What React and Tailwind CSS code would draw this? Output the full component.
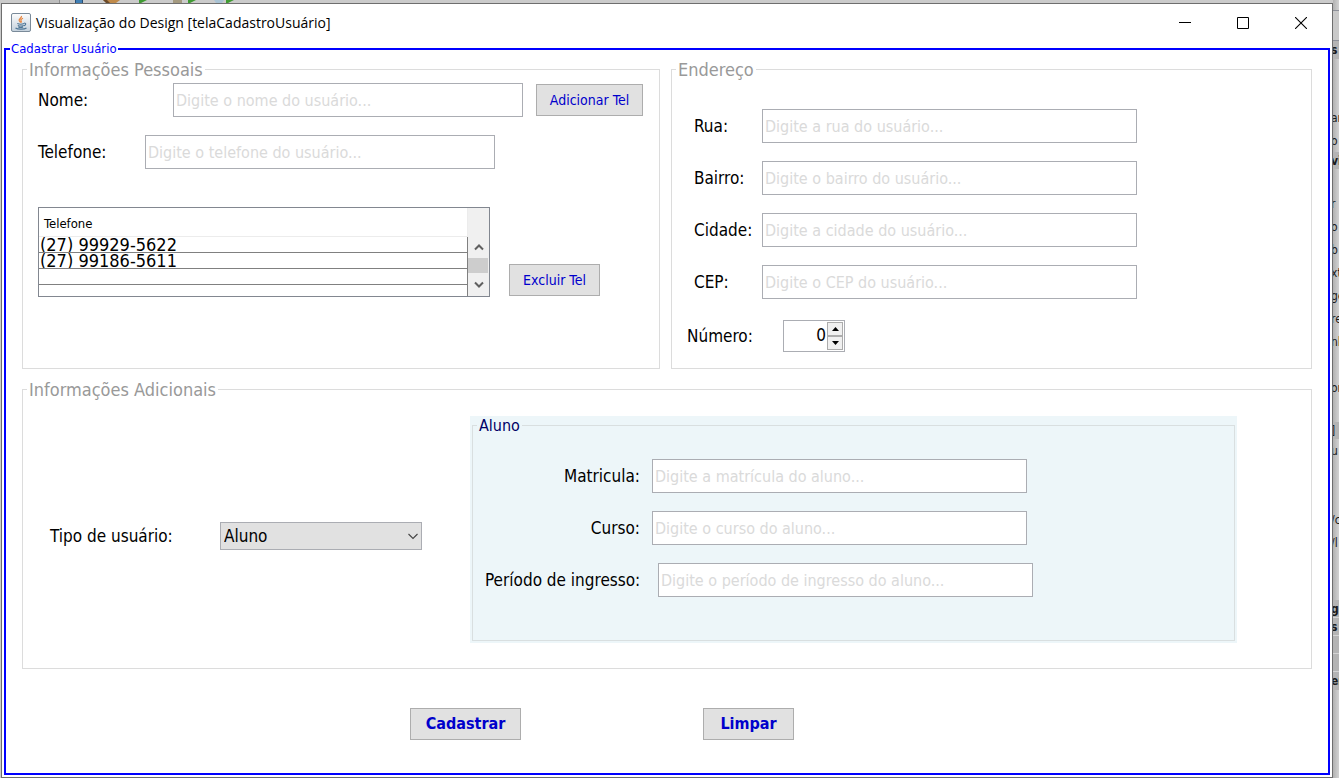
import { useId } from "react";

const tahoma = "font-['DejaVu_Sans_Condensed','Noto_Sans',sans-serif]";

const edgeRows = [
  { box: "h-[10px]", text: "" },
  { box: "h-[31px] border-y border-[#8d9099] bg-[#c9c9c9]", text: "" },
  { box: "h-[18px] bg-[#b4b4b4] font-bold", text: "s" },
  { box: "h-[47px]", text: "" },
  { box: "h-[23px]", text: "ar" },
  { box: "h-[23px]", text: "o" },
  { box: "h-[17px] bg-[#b4b4b4] font-bold", text: "vi" },
  { box: "h-[23px]", text: "" },
  { box: "h-[23px]", text: "r" },
  { box: "h-[23px]", text: "o" },
  { box: "h-[23px]", text: "b" },
  { box: "h-[23px]", text: "xt" },
  { box: "h-[23px]", text: "ge" },
  { box: "h-[23px]", text: "re" },
  { box: "h-[23px]", text: "nl" },
  { box: "h-[23px]", text: "" },
  { box: "h-[23px]", text: "or" },
  { box: "h-[23px]", text: "" },
  { box: "h-[17px] bg-[#b4b4b4]", text: "]" },
  { box: "h-[23px]", text: "u" },
  { box: "h-[46px]", text: "" },
  { box: "h-[23px]", text: "/c" },
  { box: "h-[23px]", text: "/l" },
  { box: "h-[46px]", text: "" },
  { box: "h-[18px] border-b border-[#d4d4d4] bg-[#b4b4b4] font-bold", text: "g" },
  { box: "h-[18px] border-b border-[#d4d4d4] bg-[#b4b4b4] font-bold", text: "s" },
  { box: "h-[18px] border-b border-[#d4d4d4] bg-[#b4b4b4]", text: "" },
  { box: "h-[18px] border-b border-[#d4d4d4] bg-[#b4b4b4]", text: "" },
  { box: "h-[18px] bg-[#b4b4b4] font-bold", text: "er" },
];

function JavaIcon() {
  return (
    <svg width="20" height="20" viewBox="0 0 20 20" aria-hidden="true">
      <defs>
        <linearGradient id="javaTile" x1="0" y1="0" x2="0" y2="1">
          <stop offset="0" stopColor="#fdfdfd" />
          <stop offset="1" stopColor="#c3d0dc" />
        </linearGradient>
      </defs>
      <rect x="0.5" y="0.5" width="19" height="18" rx="1.5" fill="url(#javaTile)" stroke="#7a8a99" />
      <path d="M10.4 3c1 1.500-2.600 2.700-2.300 4.300.1.800.9 1.400 1.300 2M12 5.200c-1.700.7-2.600 1.600-1.900 2.700.5.800.3 1.300-.3 1.900" fill="none" stroke="#e8833a" strokeWidth="1.200" />
      <path d="M6.300 10.600c1.800.7 5 .7 6.800 0M6.800 12.400c1.500.7 4.300.7 5.900 0M7.300 14c1.300.5 3.500.5 4.800 0M13.200 10.200c2.200-.3 1.900 2-.3 2.500M4.500 15c2 1.500 9 1.500 11 0" fill="none" stroke="#4d7595" strokeWidth="1.100" />
    </svg>
  );
}

function ToolbarEdge() {
  return (
    <svg className="block" width="250" height="3" viewBox="0 0 250 3" aria-hidden="true">
      <path d="M39 0h19v3H39z" fill="#bdbdbd" />
      <path d="M58 0h1v3h-1z" fill="#8f8f8f" />
      <path d="M75 0h7v3h-7z" fill="#3f7fb5" />
      <path d="M74 0h1v3h-1zM81 0h1v3h-1z" fill="#2a4f74" />
      <path d="M102 0h17l-4 3h-9z" fill="#c08a4a" />
      <path d="M102 0h4l3 3h-4z" fill="#6b4a2a" />
      <path d="M138 0h8l-6 3h-2z" fill="#3f9b32" />
      <path d="M172 0h9v3h-9z" fill="#a49a80" />
      <path d="M187 0h8l-6 3h-2z" fill="#3f9b32" />
      <path d="M213 0h10l-2 3h-6z" fill="#a9c3d4" />
      <path d="M225 0h8l-6 3h-2z" fill="#3f9b32" />
    </svg>
  );
}

function Field({ label, labelClass, inputClass, placeholder, children }) {
  const id = useId();
  return (
    <div className="flex items-center">
      <label htmlFor={id} className={`shrink-0 whitespace-nowrap text-[17px] leading-5 text-black ${labelClass}`}>
        {label}
      </label>
      <input
        id={id}
        type="text"
        placeholder={placeholder}
        className={`h-[34px] min-w-0 border border-[#abadb3] bg-white px-[2px] text-[16px] text-black outline-none placeholder:text-[#dadada] ${inputClass}`}
      />
      {children}
    </div>
  );
}

function SmallButton({ children, className }) {
  return (
    <button type="button" className={`h-8 shrink-0 whitespace-nowrap border border-[#adadad] bg-[#e1e1e1] text-[#0000cc] ${className}`}>
      {children}
    </button>
  );
}

function Group({ title, className, children }) {
  return (
    <fieldset className={`min-w-0 border border-[#dcdcdc] px-1 ${className}`}>
      <legend className="px-[2px] pt-[2px] text-[18px] leading-4 text-[#999999]">{title}</legend>
      {children}
    </fieldset>
  );
}

function PhoneTable() {
  return (
    <div className="flex h-[90px] w-[452px] border border-[#828790] bg-white">
      <table className="h-[88px] min-w-0 flex-1 border-separate border-spacing-0 text-left text-black">
        <thead>
          <tr>
            <th className="h-[29px] border-b border-r border-[#ececec] px-[5px] pt-[3px] text-[13px] font-normal leading-4">Telefone</th>
          </tr>
        </thead>
        <tbody>
          {["(27) 99929-5622", "(27) 99186-5611", ""].map((phone, i) => (
            <tr key={i}>
              <td className="h-4 border-b border-r border-[#808080] p-0">
                <div className="flex h-[15px] items-center overflow-hidden px-px text-[18px] leading-[15px]">{phone}</div>
              </td>
            </tr>
          ))}
          <tr>
            <td className="h-[11px] border-r border-[#808080] p-0"></td>
          </tr>
        </tbody>
      </table>
      <div className="flex w-[21px] flex-col bg-[#f0f0f0]">
        <div className="h-[29px]"></div>
        <button type="button" aria-label="Rolar para cima" className="flex h-[21px] items-center justify-center">
          <svg width="10" height="7" viewBox="0 0 10 7" aria-hidden="true">
            <path d="M1 5.500 5 1.500l4 4" fill="none" stroke="#606060" strokeWidth="2" />
          </svg>
        </button>
        <div className="mr-px h-[15px] bg-[#cdcdcd]"></div>
        <button type="button" aria-label="Rolar para baixo" className="flex flex-1 items-center justify-center">
          <svg width="10" height="7" viewBox="0 0 10 7" aria-hidden="true">
            <path d="M1 1.500l4 4 4-4" fill="none" stroke="#606060" strokeWidth="2" />
          </svg>
        </button>
      </div>
    </div>
  );
}

function NumberSpinner() {
  const arrow = "flex flex-1 items-center justify-center border border-[#acacac] bg-[#f0f0f0]";
  return (
    <div className="flex items-center pl-[15px]">
      <label htmlFor="numero" className="w-24 text-[17px] leading-5 text-black">Número:</label>
      <div className="flex h-8 w-[62px] border border-[#abadb3] bg-white p-px">
        <input id="numero" type="text" inputMode="numeric" defaultValue="0" className="min-w-0 flex-1 pr-px text-right text-[17px] text-black outline-none" />
        <div className="flex w-4 flex-col">
          <button type="button" aria-label="Aumentar" className={arrow}>
            <svg width="7" height="4" viewBox="0 0 7 4" aria-hidden="true"><path d="M0 4 3.500 0 7 4z" fill="#000" /></svg>
          </button>
          <button type="button" aria-label="Diminuir" className={arrow}>
            <svg width="7" height="4" viewBox="0 0 7 4" aria-hidden="true"><path d="M0 0 3.500 4 7 0z" fill="#000" /></svg>
          </button>
        </div>
      </div>
    </div>
  );
}

function TitleBar() {
  const control = "flex h-9 w-[58px] items-center justify-center";
  return (
    <header className="flex h-[38px] items-center justify-between pl-[7px]">
      <div className="flex items-center gap-[5px]">
        <JavaIcon />
        <h1 className="font-['Open_Sans',sans-serif] text-[14px] leading-5 text-black">Visualização do Design [telaCadastroUsuário]</h1>
      </div>
      <div className="flex">
        <button type="button" aria-label="Minimizar" className={control}>
          <svg width="12" height="12" viewBox="0 0 12 12" aria-hidden="true"><path d="M0 5h12v1H0z" fill="#000" /></svg>
        </button>
        <button type="button" aria-label="Maximizar" className={control}>
          <svg width="12" height="12" viewBox="0 0 12 12" aria-hidden="true"><path d="M.5.5h11v11H.5z" fill="none" stroke="#000" /></svg>
        </button>
        <button type="button" aria-label="Fechar" className={control}>
          <svg width="12" height="12" viewBox="0 0 12 12" aria-hidden="true"><path d="m0 0 12 12M12 0 0 12" fill="none" stroke="#000" strokeWidth="1.100" /></svg>
        </button>
      </div>
    </header>
  );
}

export default function App() {
  return (
    <div className={`flex min-h-screen flex-col bg-[#cbcbcb] ${tahoma}`}>
      <div className="flex flex-1 pl-px">
        <div className="flex min-w-0 flex-1 flex-col">
          <ToolbarEdge />
          <main className="flex flex-1 flex-col border border-[#6e6e6e] bg-white px-[2px] pb-[2px]">
            <TitleBar />
            <form className="flex flex-1 flex-col" onSubmit={(e) => e.preventDefault()}>
              <fieldset className="min-w-0 flex-1 border-2 border-[#0000ff] px-1">
                <legend className="px-px text-[13px] leading-[14px] text-[#0000ff]">Cadastrar Usuário</legend>
                <div className="px-3 pb-[33px] pt-1">
                  <div className="grid grid-cols-[638fr_641fr] gap-[11px]">
                    <Group title="Informações Pessoais" className="h-[309px]">
                      <div className="flex flex-col pl-[11px] pt-[5px]">
                        <Field label="Nome:" labelClass="w-[135px]" inputClass="w-[350px]" placeholder="Digite o nome do usuário...">
                          <SmallButton className="ml-[13px] w-[107px] text-[14px]">Adicionar Tel</SmallButton>
                        </Field>
                        <div className="pt-[18px]">
                          <Field label="Telefone:" labelClass="w-[107px]" inputClass="w-[350px]" placeholder="Digite o telefone do usuário..." />
                        </div>
                        <div className="flex items-end gap-[19px] pt-[38px]">
                          <PhoneTable />
                          <SmallButton className="mb-px w-[91px] text-[14px]">Excluir Tel</SmallButton>
                        </div>
                      </div>
                    </Group>
                    <Group title="Endereço" className="h-[309px]">
                      <div className="flex flex-col gap-[18px] pl-[18px] pt-[31px]">
                        <Field label="Rua:" labelClass="w-[68px]" inputClass="w-[375px]" placeholder="Digite a rua do usuário..." />
                        <Field label="Bairro:" labelClass="w-[68px]" inputClass="w-[375px]" placeholder="Digite o bairro do usuário..." />
                        <Field label="Cidade:" labelClass="w-[68px]" inputClass="w-[375px]" placeholder="Digite a cidade do usuário..." />
                        <Field label="CEP:" labelClass="w-[68px]" inputClass="w-[375px]" placeholder="Digite o CEP do usuário..." />
                      </div>
                      <div className="-ml-1 pt-[21px]">
                        <NumberSpinner />
                      </div>
                    </Group>
                  </div>

                  <Group title="Informações Adicionais" className="mt-[11px] h-[289px]">
                    <div className="flex items-start pl-[23px] pr-[70px] pt-[18px]">
                      <div className="flex w-[420px] shrink-0 items-center pt-[106px]">
                        <label htmlFor="tipo" className="w-[170px] text-[17px] leading-5 text-black">Tipo de usuário:</label>
                        <div className="relative">
                          <select id="tipo" className="h-7 w-[202px] appearance-none border border-[#abadb3] bg-[#e1e1e1] px-[3px] text-[17px] leading-5 text-black">
                            <option>Aluno</option>
                          </select>
                          <svg className="pointer-events-none absolute right-1 top-[11px]" width="10" height="7" viewBox="0 0 10 7" aria-hidden="true">
                            <path d="m.5 1 4.500 4.500L9.500 1" fill="none" stroke="#444" strokeWidth="1.100" />
                          </svg>
                        </div>
                      </div>
                      <div className="min-w-0 flex-1 bg-[#edf6f9] px-[2px] pb-[2px]">
                        <fieldset className="h-[225px] min-w-0 border border-[#d9dfe0] px-1">
                          <legend className="px-[2px] pt-[2px] text-[16px] leading-4 text-[#000066]">Aluno</legend>
                          <div className="flex flex-col gap-[18px] pl-2 pt-[25px]">
                            <Field label="Matricula:" labelClass="w-[167px] pr-3 text-right" inputClass="w-[375px]" placeholder="Digite a matrícula do aluno..." />
                            <Field label="Curso:" labelClass="w-[167px] pr-3 text-right" inputClass="w-[375px]" placeholder="Digite o curso do aluno..." />
                            <Field label="Período de ingresso:" labelClass="w-[173px]" inputClass="w-[375px]" placeholder="Digite o período de ingresso do aluno..." />
                          </div>
                        </fieldset>
                      </div>
                    </div>
                  </Group>

                  <div className="flex gap-[182px] pl-[388px] pt-[39px]">
                    <SmallButton className="w-[111px] text-[16px] font-bold">Cadastrar</SmallButton>
                    <SmallButton className="w-[91px] text-[16px] font-bold">Limpar</SmallButton>
                  </div>
                </div>
              </fieldset>
            </form>
          </main>
        </div>
        <aside aria-hidden="true" className="w-[6px] shrink-0 overflow-hidden bg-linear-to-r from-[#b2b2b2] to-[#d2d2d2] -indent-[2px] text-[12px] text-[#1a1a1a]">
          {edgeRows.map((row, i) => (
            <div key={i} className={`flex items-center ${row.box}`}>{row.text}</div>
          ))}
        </aside>
      </div>
    </div>
  );
}
